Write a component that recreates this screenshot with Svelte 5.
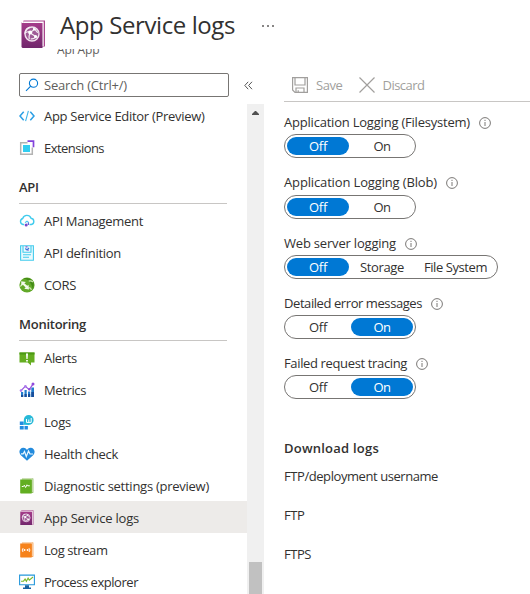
<script>
  const menu = [
    { label: 'App Service Editor (Preview)', icon: 'code', w: 160.5 },
    { label: 'Extensions', icon: 'ext', w: 60 },
    { head: 'API', h: 40, w: 19.5 },
    { label: 'API Management', icon: 'cloud', w: 99 },
    { label: 'API definition', icon: 'def', w: 77 },
    { label: 'CORS', icon: 'cors', w: 32 },
    { head: 'Monitoring', h: 41, w: 67 },
    { label: 'Alerts', icon: 'alert', w: 33 },
    { label: 'Metrics', icon: 'metrics', w: 42 },
    { label: 'Logs', icon: 'logs', w: 27 },
    { label: 'Health check', icon: 'health', w: 74 },
    { label: 'Diagnostic settings (preview)', icon: 'diag', w: 165 },
    { label: 'App Service logs', icon: 'book', w: 95, on: true },
    { label: 'Log stream', icon: 'stream', w: 63.5 },
    { label: 'Process explorer', icon: 'process', w: 94 }
  ];
  let settings = $state([
    { label: 'Application Logging (Filesystem)', w: 186, options: ['Off', 'On'], sel: 0, gap: 2, h: 60 },
    { label: 'Application Logging (Blob)', w: 153, options: ['Off', 'On'], sel: 0, gap: 3, h: 61 },
    { label: 'Web server logging', w: 112, options: ['Off', 'Storage', 'File System'], sel: 0, gap: 2, h: 60 },
    { label: 'Detailed error messages', w: 138, options: ['Off', 'On'], sel: 1, gap: 2, h: 60 },
    { label: 'Failed request tracing', w: 123, options: ['Off', 'On'], sel: 1, gap: 2, h: 60 }
  ]);
  const optionWidths = { Off: 18, On: 17, Storage: 44, 'File System': 63 };

  // Spread letters evenly so each label takes its designed width.
  function fit(node, width) {
    const natural = node.getBoundingClientRect().width;
    node.style.letterSpacing = (width - natural) / node.textContent.length + 'px';
  }
</script>

{#snippet bookIcon(size)}
  <svg width={size} height={size * 1.12} viewBox="0 0 25 28">
    <defs><linearGradient id="plum" x2="0" y2="1"><stop stop-color="#a73d8b" /><stop offset="1" stop-color="#70266b" /></linearGradient></defs>
    <path d="M2.5 .5h21.5V26.5H2z" fill="#a9458d" />
    <path d="M2.8 1.5H22.7V26h-2V3H2z" fill="#fff" />
    <path d="M1 3h20.5V28H1.5L.5 27V2z" fill="url(#plum)" />
    <circle cx="11" cy="14" r="7" fill="#9f5b96" stroke="#f0e3ee" stroke-width="1.4" />
    <path d="M9 7.3c-3 .6-4.8 3-5 5.7 1.5-1 3-1.4 4.3-1.2M12.3 8.2c1.5 1 3 2.4 4.4 4.6M9.6 13.2l5.5 3.6M8.7 14c-.9 1.6-1 3.2-.5 5.4M10.2 11.8c1.7-1.6 3.3-2.4 5.2-2.4M9.7 18.8c2 .3 3.6-.2 4.6-1.5" fill="none" stroke="#f5edf4" stroke-width="1.2" />
    <circle cx="9.2" cy="12.6" r="2" fill="#fff" /><circle cx="14.6" cy="16.6" r="1.6" fill="#fff" /><circle cx="13" cy="9.2" r="1.1" fill="#fff" />
  </svg>
{/snippet}

{#snippet icon(name)}
  {#if name === 'book'}
    {@render bookIcon(14)}
  {:else}
    <svg width="16" height="16" viewBox="0 0 16 16" fill="none">
      {#if name === 'code'}
        <path d="M4.7 3.7L1 8l3.7 4.3M11.3 3.7L15 8l-3.7 4.3" stroke="#2b9fe5" stroke-width="1.5" />
        <path d="M9.4 2.8L6.6 13.2" stroke="#3fb5ea" stroke-width="1.1" />
      {:else if name === 'ext'}
        <path d="M8.5 2.7H1.7v11.6h11.6V7.5" stroke="#b3b3b3" stroke-width="1.5" />
        <path d="M4 5h7v7H4z" fill="#32cdf0" />
        <path d="M8.5 1.2h6v6" stroke="#8343dc" stroke-width="1.7" />
      {:else if name === 'cloud'}
        <path d="M5.2 11.5H4A3.1 3.1 0 013.7 5.5 4.4 4.4 0 0112 5.2a3.2 3.2 0 01.3 6.3H10.5" stroke="#40cbed" stroke-width="1.4" />
        <path d="M6 9.6l2-1.4 2 1.4" stroke="#45c7ef" stroke-width="1.1" />
        <circle cx="7.2" cy="12" r="1.5" fill="#7949c8" /><path d="M9.4 9.5v2.5" stroke="#6b62da" stroke-width="1.2" />
      {:else if name === 'def'}
        <path d="M1.6.7h12.8v14.6H1.6z" fill="#eafafd" stroke="#43cbed" stroke-width="1.1" />
        <path d="M4 1v6.3h8V1M4 9.8h8M4 12.3h6" stroke="#43cbed" stroke-width="1.1" />
        <path d="M6.3 3.5L8 5l2-2" stroke="#357ae0" stroke-width="1.2" /><path d="M6.5 1.8h2M8.5 5.2h1.2" stroke="#8455d0" stroke-width="1.2" />
      {:else if name === 'cors'}
        <circle cx="8" cy="8" r="7.6" fill="#62a929" />
        <path d="M4.5 1.3C7 2 9.4 3.5 11 5.5S14 11 13.7 12.8 15.4 9 14.5 5.5 8 .2 4.5 1.3z" fill="#438a16" />
        <path d="M1.2 9.5c1.2-1.7 2.4-2.5 4-2.6M9.7 4.2c1.5-.7 2.8-.4 4.2.7M9.8 10.6c1.4.2 2.3 1.1 2.6 2.2" stroke="#cfe8b3" stroke-width="1.3" />
        <path d="M2.2 4.2L7 5.1 5.3 6.2l3 2.6 1.2-1 .5 4.6-4.7-.7 1.3-1.1-3-3-1.2.9z" fill="#f3faeb" />
      {:else if name === 'alert'}
        <path d="M.5 2.5h15v10H12v3L8.7 12.5H.5z" fill="#65ad20" />
        <path d="M.5 2.5h15v2H.5z" fill="#4b9912" /><path d="M7 3.5h2L8.6 9H7.4zM7.1 10h1.8v1.5H7.1z" fill="#fff" />
      {:else if name === 'metrics'}
        <path d="M2 10h2.2v5H2zM5.5 8h2.2v7H5.5zM9 9.5h2.2V15H9zM12.3 5.5H15V15h-2.7z" fill="#237dcd" />
        <path d="M2 13h2.2v2H2zM5.5 12h2.2v3H5.5zM9 12h2.2v3H9zM12.3 10H15v5h-2.7z" fill="#184e9b" />
        <path d="M2 8.7L6.3 4.4l4 3.2 3.5-5.3" stroke="#9655df" stroke-width="1.2" />
        <circle cx="2" cy="8.6" r="1.3" fill="#ad7bea" /><circle cx="6.4" cy="4.3" r="1.3" fill="#ad7bea" /><circle cx="10.3" cy="7.3" r="1.2" fill="#9149dc" /><circle cx="14" cy="2" r="1.5" fill="#9149dc" />
      {:else if name === 'logs'}
        <path d="M.8 7.5h3.9v3.6H.8zM.8 12h3.9v3.4H.8zM5.5 12h3.4v3.4H5.5z" fill="#238be0" />
        <path d="M4.8 10.8V6a4.9 4.9 0 114.9 4.9z" fill="#27b9d8" />
        <path d="M7.5 5v3.4h4.7V4M9.8 5.5v3" stroke="#fff" stroke-width="1" />
      {:else if name === 'health'}
        <path d="M8 14.8L1.6 9C-1.2 5.4 1.4 1.5 4.4 1.7 6.3 1.8 7.5 2.9 8 4c.5-1.1 1.7-2.2 3.6-2.3 3-.2 5.6 3.7 2.8 7.3z" fill="#238bdd" />
        <path d="M2 7.8h2.2L5.5 5.5l1.8 5L9.5 5l1.5 3h3" stroke="#e9f7ff" stroke-width="1.2" />
      {:else if name === 'diag' || name === 'stream'}
        <path d="M3 .5h11.3v14.2H2z" fill={name === 'diag' ? '#74ab39' : '#f28b2c'} />
        <path d="M2.2 1.2h11V14" stroke="#fff" stroke-width=".8" />
        <path d="M1.2 1.6h11.5v13.8H1.8l-.6-.5z" fill={name === 'diag' ? '#62ae21' : '#f6821b'} />
        {#if name === 'diag'}
          <path d="M2.8 8.5h1.6l.9-1.3 1.3 2.3 1.4-2.7.8 1h2" stroke="#fff" stroke-width="1" />
        {:else}
          <path d="M4.2 6.2c-1.2 1.1-1.2 2.7 0 3.8M9.9 6.2c1.2 1.1 1.2 2.7 0 3.8" stroke="#fff" /><circle cx="5.5" cy="8.1" r="1" fill="#fff" /><circle cx="8.6" cy="8.1" r="1" fill="#fff" />
        {/if}
      {:else if name === 'process'}
        <path d="M.6 1.1h14.8v9.6H.6z" fill="#fff" stroke="#2598dc" stroke-width="1.1" />
        <path d="M2 7.2h2.5l1.6-2.1 1.3 2.2 1.7-3.2 1.2 2L14 3" stroke="#7ab82b" stroke-width="1.1" />
        <path d="M6 11.3h4v2.3h2V15H4v-1.4h2z" fill="#16619f" />
      {/if}
    </svg>
  {/if}
{/snippet}

<div class="page">
  <header>
    <div class="logo">{@render bookIcon(25)}</div>
    <div>
      <div class="title"><h1><span use:fit={175}>App Service logs</span></h1><span class="more"><i></i><i></i><i></i></span></div>
      <div class="subtitle"><p><span use:fit={42.5}>Api App</span></p></div>
    </div>
  </header>
  <div class="body">
    <nav>
      <div class="searchrow">
        <div class="search">
          <svg width="14" height="14" viewBox="0 0 14 14" fill="none" stroke="#0078d4" stroke-width="1.1"><circle cx="8.5" cy="5.2" r="4.1" /><path d="M5.7 8.2L1 12.8" /></svg>
          <span use:fit={83}>Search (Ctrl+/)</span>
        </div>
        <svg class="collapse" width="9" height="9" viewBox="0 0 9 9" fill="none" stroke="#555"><path d="M4.2.8L.8 4.5l3.4 3.7M8 .8L4.6 4.5 8 8.2" /></svg>
      </div>
      <div class="scroller">
        <div class="list">
          {#each menu as item, i}
            {#if item.head}
              <div class="head" class:lower={i > 2} style:height="{item.h}px"><b use:fit={item.w}>{item.head}</b></div>
            {:else}
              <div class="item" class:lower={i > 2} class:on={item.on}>
                <div class="ico">{@render icon(item.icon)}</div>
                <span use:fit={item.w}>{item.label}</span>
              </div>
            {/if}
          {/each}
        </div>
        <div class="track">
          <svg width="7" height="4" viewBox="0 0 7 4"><path d="M3 0h1l3 3v1H0V3z" fill="#505050" /></svg>
          <div class="thumb"></div>
        </div>
      </div>
    </nav>
    <main>
      <div class="toolbar">
        <svg width="16" height="16" viewBox="0 0 16 16" fill="none" stroke="#a19f9d" stroke-width="1.2"><path d="M.6.6h14.8v14.8H3L.6 13zM3 .6V8h10V.6M4 15.4V11h8v4.4M6.2 15.4v-2.2" /></svg>
        <span use:fit={26.5}>Save</span>
        <svg class="cross" width="16" height="16" viewBox="0 0 16 16" fill="none" stroke="#a19f9d" stroke-width="1.2"><path d="M.5.5l15 15M15.5.5l-15 15" /></svg>
        <span use:fit={42}>Discard</span>
      </div>
      {#each settings as s}
        <section style:height="{s.h}px">
          <div class="label">
            <span use:fit={s.w}>{s.label}</span>
            <svg width="12" height="12" viewBox="0 0 12 12" fill="none" stroke="#6b6967" stroke-width=".9"><circle cx="6" cy="6" r="5.4" /><path d="M6 5v4M6 2.8v1.2" /></svg>
          </div>
          <div class="toggle" style:margin-top="{s.gap}px" class:wide={s.options.length > 2}>
            {#each s.options as o, i}
              <button class:sel={s.sel === i} onclick={() => (s.sel = i)}><span use:fit={optionWidths[o]}>{o}</span></button>
            {/each}
          </div>
        </section>
      {/each}
      <h2><span use:fit={95}>Download logs</span></h2>
      <p class="field"><span use:fit={154}>FTP/deployment username</span></p>
      <p class="field"><span use:fit={20.5}>FTP</span></p>
      <p class="field"><span use:fit={27}>FTPS</span></p>
    </main>
  </div>
</div>

<style>
  :global(body) { margin: 0; background: #fff; }
  .page { width: 530px; height: 594px; overflow: hidden; display: flex; flex-direction: column; background: #fff; color: #323130; font: 13px/18px "Open Sans", "Noto Sans", sans-serif; }
  span, b { display: inline-block; white-space: nowrap; }
  svg { display: block; flex: none; }
  h1, h2, p { margin: 0; }
  header { display: flex; height: 73px; flex: none; }
  .logo { width: 60px; box-sizing: border-box; padding: 20px 0 0 21px; flex: none; }
  .title { display: flex; height: 49px; }
  h1 { font-size: 24px; line-height: 32px; font-weight: 400; padding-top: 9px; width: 202px; }
  .more { display: flex; gap: 3px; padding-top: 25px; }
  .more i { width: 2px; height: 2px; background: #605e5c; border-radius: 1px; }
  .subtitle { height: 9px; overflow: hidden; margin-left: -3px; }
  .subtitle p { font-size: 12px; line-height: 16px; margin-top: -7px; color: #605e5c; }
  .body { display: flex; flex: 1; min-height: 0; }
  nav { width: 264px; flex: none; display: flex; flex-direction: column; }
  .searchrow { display: flex; align-items: center; height: 24px; padding-left: 19px; flex: none; }
  .search { box-sizing: border-box; width: 210px; height: 24px; border: 1px solid #777573; border-radius: 2px; display: flex; align-items: center; padding-left: 5px; gap: 5px; color: #605e5c; }
  .collapse { margin-left: 15px; }
  .scroller { display: flex; flex: 1; min-height: 0; }
  .list { width: 247px; padding-top: 3px; }
  .item { display: flex; align-items: center; height: 32px; padding-left: 19px; }
  .item.on { background: #edebe9; }
  .ico { width: 25px; }
  .ico svg { margin-top: -1px; }
  .on .ico svg { margin-left: 1px; }
  .item.lower span { padding-top: 2px; }
  .item.lower .ico svg { margin-top: 1px; }
  .head { box-sizing: border-box; margin: 0 20px 0 19px; border-bottom: 1px solid #c8c6c4; padding-top: 14px; }
  .head.lower { padding-top: 15px; }
  b, h2 { font-weight: 600; }
  .track { width: 17px; box-sizing: border-box; margin-top: 7px; background: #f0f0f0; display: flex; flex-direction: column; align-items: center; padding-top: 7px; }
  .thumb { width: 13px; height: 32px; margin-top: auto; background: #c1c1c1; }
  main { flex: 1; padding-left: 284px; margin-left: -264px; }
  .toolbar { display: flex; align-items: center; height: 29px; box-sizing: border-box; border-bottom: 1px solid #c8c6c4; color: #a19f9d; padding: 0 0 5px 8px; margin-bottom: 10px; }
  .toolbar span { margin-left: 8px; }
  .cross { margin-left: 16px; }
  .label { display: flex; align-items: center; gap: 9px; height: 20px; }
  .label svg { margin-top: 1px; }
  .toggle { box-sizing: border-box; width: 132px; height: 24px; border: 1px solid #777573; border-radius: 12px; padding: 2px; display: flex; gap: 2px; }
  .toggle.wide { width: 214px; }
  button { flex: none; width: 62px; height: 18px; border: 0; border-radius: 9px; padding: 0; background: none; color: inherit; font: inherit; line-height: 18px; text-align: center; }
  .wide button:last-child { width: 81px; }
  button.sel { background: #0078d4; color: #fff; }
  h2 { font-size: 13px; line-height: 18px; padding-top: 26px; }
  .field { height: 39px; padding-top: 10px; box-sizing: border-box; }
</style>
